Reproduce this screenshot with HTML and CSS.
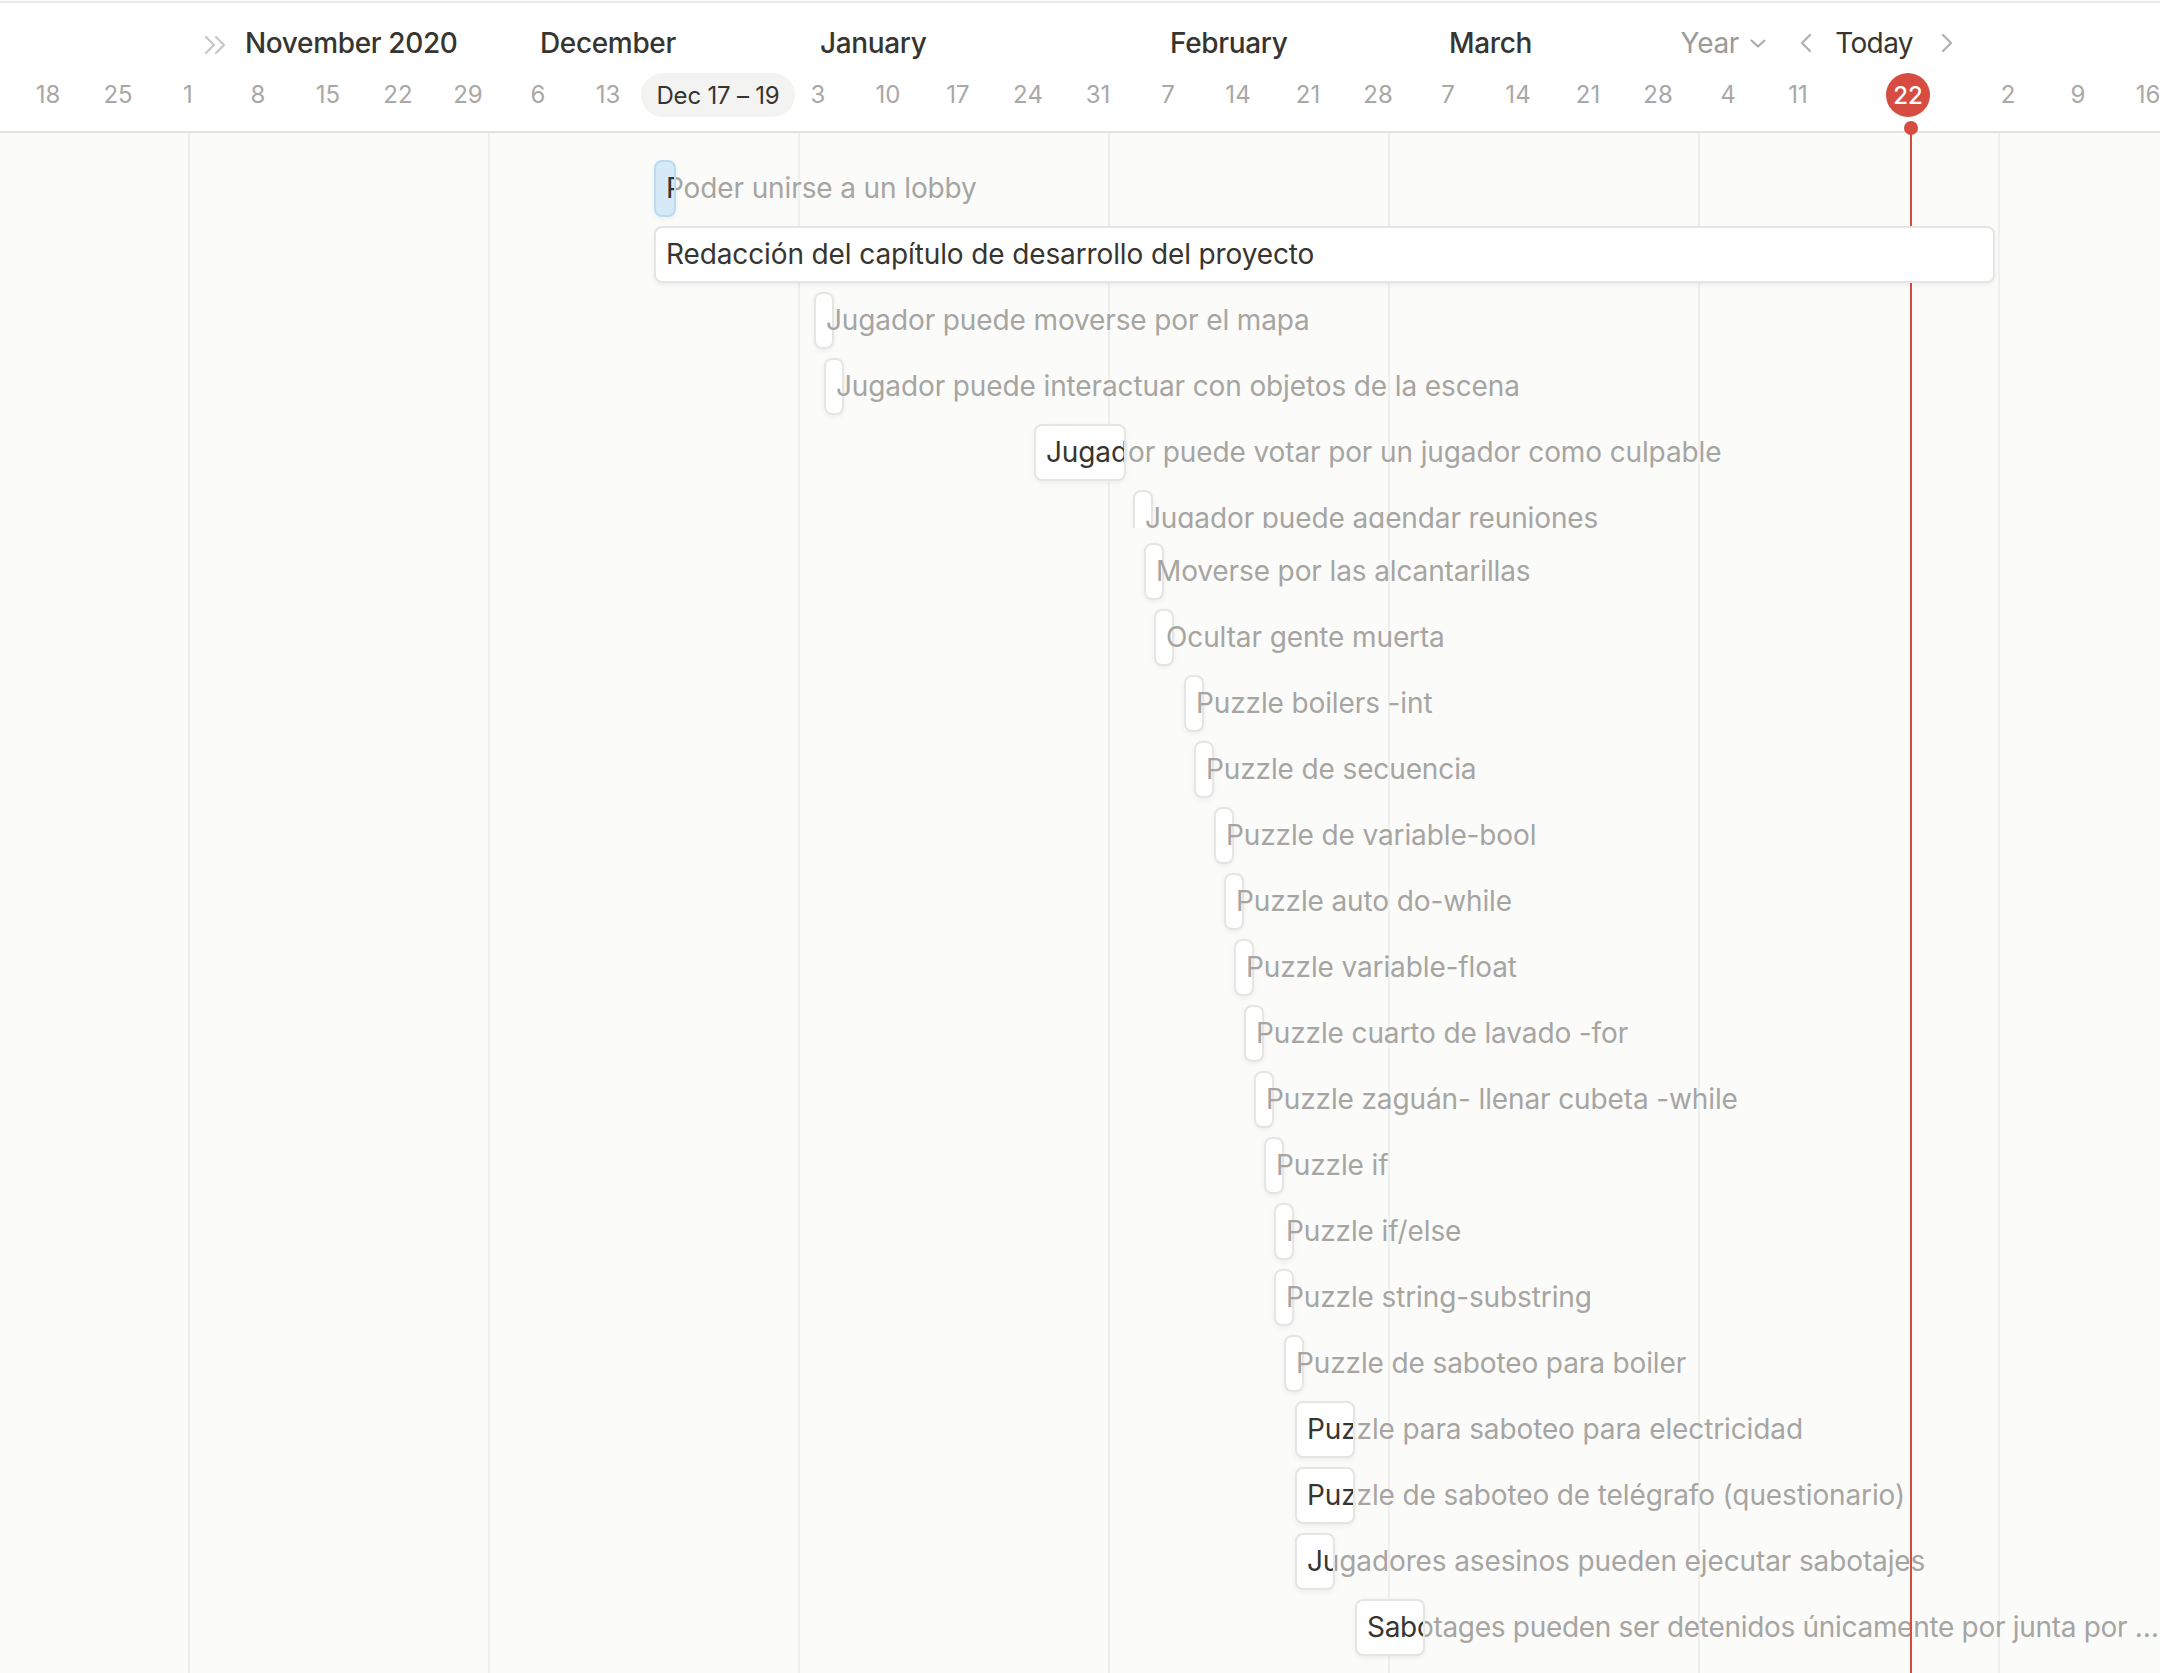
FILE: index.html
```html
<!DOCTYPE html>
<html lang="es">
<head>
<meta charset="utf-8">
<title>Timeline</title>
<link rel="stylesheet" href="styles.css">
</head>
<body>
<div class="timeline">
  <header class="head">
    <div class="months">
      <svg class="expand" style="left:204px" width="24" height="20" viewBox="0 0 24 20"><path d="M2 2l8 8-8 8M12 2l8 8-8 8" fill="none" stroke="#c7c7c5" stroke-width="2.2" stroke-linecap="round" stroke-linejoin="round"/></svg>
      <span class="month" style="left:245px">November 2020</span>
      <span class="month" style="left:540px">December</span>
      <span class="month" style="left:820px">January</span>
      <span class="month" style="left:1170px">February</span>
      <span class="month" style="left:1449px">March</span>
      <div class="toolbar">
        <span class="view">Year</span>
        <svg class="caret" width="16" height="9" viewBox="0 0 16 9"><path d="M1.5 1.5l6.5 6 6.5-6" fill="none" stroke="#a8a8a6" stroke-width="2" stroke-linecap="round" stroke-linejoin="round"/></svg>
        <svg class="nav prev" width="14" height="20" viewBox="0 0 14 20"><path d="M11 2L3 10l8 8" fill="none" stroke="#b3b3b1" stroke-width="2.4" stroke-linecap="round" stroke-linejoin="round"/></svg>
        <span class="today">Today</span>
        <svg class="nav next" width="14" height="20" viewBox="0 0 14 20"><path d="M3 2l8 8-8 8" fill="none" stroke="#b3b3b1" stroke-width="2.4" stroke-linecap="round" stroke-linejoin="round"/></svg>
      </div>
    </div>
    <div class="days">
      <span class="day" style="left:48px">18</span>
      <span class="day" style="left:118px">25</span>
      <span class="day" style="left:188px">1</span>
      <span class="day" style="left:258px">8</span>
      <span class="day" style="left:328px">15</span>
      <span class="day" style="left:398px">22</span>
      <span class="day" style="left:468px">29</span>
      <span class="day" style="left:538px">6</span>
      <span class="day" style="left:608px">13</span>
      <span class="range">Dec 17 – 19</span>
      <span class="day" style="left:818px">3</span>
      <span class="day" style="left:888px">10</span>
      <span class="day" style="left:958px">17</span>
      <span class="day" style="left:1028px">24</span>
      <span class="day" style="left:1098px">31</span>
      <span class="day" style="left:1168px">7</span>
      <span class="day" style="left:1238px">14</span>
      <span class="day" style="left:1308px">21</span>
      <span class="day" style="left:1378px">28</span>
      <span class="day" style="left:1448px">7</span>
      <span class="day" style="left:1518px">14</span>
      <span class="day" style="left:1588px">21</span>
      <span class="day" style="left:1658px">28</span>
      <span class="day" style="left:1728px">4</span>
      <span class="day" style="left:1798px">11</span>
      <span class="todaybadge">22</span>
      <span class="day" style="left:2008px">2</span>
      <span class="day" style="left:2078px">9</span>
      <span class="day" style="left:2148px">16</span>
    </div>
  </header>
  <main class="canvas">
    <i class="grid" style="left:188px"></i>
    <i class="grid" style="left:488px"></i>
    <i class="grid" style="left:798px"></i>
    <i class="grid" style="left:1108px"></i>
    <i class="grid" style="left:1388px"></i>
    <i class="grid" style="left:1698px"></i>
    <i class="grid" style="left:1998px"></i>
    <div class="nowline" style="left:1910px"><b class="nowdot"></b></div>
    <div class="rows">
      <div class="row"><span class="label" style="left:666px">Poder unirse a un lobby</span><div class="bar blue" style="left:654px;width:22px"><span>Poder unirse a un lobby</span></div></div>
      <div class="row"><span class="label" style="left:666px">Redacción del capítulo de desarrollo del proyecto</span><div class="bar" style="left:654px;width:1341px"><span>Redacción del capítulo de desarrollo del proyecto</span></div></div>
      <div class="row narrow"><span class="label" style="left:826px">Jugador puede moverse por el mapa</span><div class="bar" style="left:814px;width:20px"></div></div>
      <div class="row narrow"><span class="label" style="left:836px">Jugador puede interactuar con objetos de la escena</span><div class="bar" style="left:824px;width:20px"></div></div>
      <div class="row"><span class="label" style="left:1046px">Jugador puede votar por un jugador como culpable</span><div class="bar" style="left:1034px;width:92px"><span>Jugador puede votar por un jugador como culpable</span></div></div>
      <div class="row narrow clipped"><span class="label" style="left:1145px">Jugador puede agendar reuniones</span><div class="bar" style="left:1133px;width:20px"></div></div>
      <div class="row narrow"><span class="label" style="left:1156px">Moverse por las alcantarillas</span><div class="bar" style="left:1144px;width:20px"></div></div>
      <div class="row narrow"><span class="label" style="left:1166px">Ocultar gente muerta</span><div class="bar" style="left:1154px;width:20px"></div></div>
      <div class="row narrow"><span class="label" style="left:1196px">Puzzle boilers -int</span><div class="bar" style="left:1184px;width:20px"></div></div>
      <div class="row narrow"><span class="label" style="left:1206px">Puzzle de secuencia</span><div class="bar" style="left:1194px;width:20px"></div></div>
      <div class="row narrow"><span class="label" style="left:1226px">Puzzle de variable-bool</span><div class="bar" style="left:1214px;width:20px"></div></div>
      <div class="row narrow"><span class="label" style="left:1236px">Puzzle auto do-while</span><div class="bar" style="left:1224px;width:20px"></div></div>
      <div class="row narrow"><span class="label" style="left:1246px">Puzzle variable-float</span><div class="bar" style="left:1234px;width:20px"></div></div>
      <div class="row narrow"><span class="label" style="left:1256px">Puzzle cuarto de lavado -for</span><div class="bar" style="left:1244px;width:20px"></div></div>
      <div class="row narrow"><span class="label" style="left:1266px">Puzzle zaguán- llenar cubeta -while</span><div class="bar" style="left:1254px;width:20px"></div></div>
      <div class="row narrow"><span class="label" style="left:1276px">Puzzle if</span><div class="bar" style="left:1264px;width:20px"></div></div>
      <div class="row narrow"><span class="label" style="left:1286px">Puzzle if/else</span><div class="bar" style="left:1274px;width:20px"></div></div>
      <div class="row narrow"><span class="label" style="left:1286px">Puzzle string-substring</span><div class="bar" style="left:1274px;width:20px"></div></div>
      <div class="row narrow"><span class="label" style="left:1296px">Puzzle de saboteo para boiler</span><div class="bar" style="left:1284px;width:20px"></div></div>
      <div class="row"><span class="label" style="left:1307px">Puzzle para saboteo para electricidad</span><div class="bar" style="left:1295px;width:60px"><span>Puzzle para saboteo para electricidad</span></div></div>
      <div class="row"><span class="label" style="left:1307px">Puzzle de saboteo de telégrafo (questionario)</span><div class="bar" style="left:1295px;width:60px"><span>Puzzle de saboteo de telégrafo (questionario)</span></div></div>
      <div class="row"><span class="label" style="left:1307px">Jugadores asesinos pueden ejecutar sabotajes</span><div class="bar" style="left:1295px;width:40px"><span>Jugadores asesinos pueden ejecutar sabotajes</span></div></div>
      <div class="row"><span class="label tight" style="left:1367px">Sabotages pueden ser detenidos únicamente por junta por tiempo limitado</span><div class="bar" style="left:1355px;width:70px"><span class="tight">Sabotages pueden ser detenidos únicamente por junta por tiempo limitado</span></div></div>
    </div>
  </main>
</div>
</body>
</html>
```
FILE: styles.css
```css
* { box-sizing: border-box; }
html, body { margin: 0; padding: 0; }
body {
  font-family: Inter, "Noto Sans", "Liberation Sans", sans-serif;
  color: #37352f;
  background: #fbfbfa;
}
.timeline {
  width: 2160px;
  height: 1673px;
  display: flex;
  flex-direction: column;
  overflow: hidden;
}
.head {
  flex: none;
  margin-top: 1px;
  height: 132px;
  background: #fff;
  border-top: 2px solid #e9e9e8;
  border-bottom: 2px solid #e3e3e2;
  display: flex;
  flex-direction: column;
}
.months {
  position: relative;
  height: 66px;
  display: flex;
  align-items: center;
  justify-content: flex-end;
  padding-right: 206px;
  padding-top: 14px;
}
.expand { position: absolute; top: 32px; }
.month {
  position: absolute;
  top: 22px;
  font-size: 28px;
  font-weight: 500;
  line-height: 36px;
  letter-spacing: -0.35px;
  white-space: nowrap;
  color: #37352f;
}
.toolbar {
  display: flex;
  align-items: center;
  height: 36px;
  margin-top: -1px;
}
.view { font-size: 28px; color: #9b9a97; letter-spacing: -0.3px; }
.caret { margin-left: 11px; margin-top: 2px; }
.prev { margin-left: 33px; }
.today { font-size: 28px; color: #37352f; letter-spacing: -0.6px; margin-left: 22px; margin-right: 27px; }
.days {
  position: relative;
  flex: 1;
}
.day {
  position: absolute;
  top: 10px;
  transform: translateX(-50%);
  font-size: 24px;
  line-height: 32px;
  color: #a9a8a5;
  white-space: nowrap;
}
.range {
  position: absolute;
  left: 641px;
  top: 4px;
  width: 154px;
  height: 44px;
  border-radius: 22px;
  background: #f3f3f2;
  display: flex;
  align-items: center;
  justify-content: center;
  font-size: 24px;
  letter-spacing: -0.2px;
  color: #37352f;
  white-space: nowrap;
}
.todaybadge {
  position: absolute;
  left: 1886px;
  top: 4px;
  width: 44px;
  height: 44px;
  border-radius: 50%;
  background: #d64c40;
  color: #fff;
  font-size: 24px;
  font-weight: 500;
  display: flex;
  align-items: center;
  justify-content: center;
}
.canvas {
  position: relative;
  flex: 1;
  background: #fbfbfa;
}
.grid {
  position: absolute;
  top: 0;
  bottom: 0;
  width: 2px;
  background: #efefee;
}
.nowline {
  position: absolute;
  top: -2px;
  bottom: 0;
  width: 2px;
  background: #d64c40;
  z-index: 2;
}
.nowdot {
  position: absolute;
  left: -6px;
  top: -10px;
  width: 14px;
  height: 14px;
  border-radius: 50%;
  background: #d64c40;
}
.rows {
  padding-top: 27px;
  display: flex;
  flex-direction: column;
  gap: 9px;
}
.row {
  position: relative;
  height: 57px;
  flex: none;
}
.row.clipped {
  height: 38px;
  overflow: hidden;
  margin-bottom: 6px;
}
.label {
  position: absolute;
  top: 0;
  right: 0;
  z-index: 1;
  font-size: 28px;
  line-height: 57px;
  letter-spacing: -0.12px;
  color: #a6a5a2;
  white-space: nowrap;
  overflow: hidden;
  text-overflow: ellipsis;
}
.row.narrow .label { z-index: 4; }
.bar {
  position: absolute;
  top: 0;
  height: 57px;
  background: #fff;
  border: 2px solid #e5e5e4;
  border-radius: 8px;
  box-shadow: 0 2px 5px rgba(15, 15, 15, 0.06);
  overflow: hidden;
  z-index: 3;
}
.bar span {
  display: block;
  padding-left: 10px;
  font-size: 28px;
  line-height: 53px;
  letter-spacing: -0.12px;
  color: #37352f;
  white-space: nowrap;
}
.label.tight, .bar span.tight { letter-spacing: -0.3px; }
.bar.blue {
  background: #d5eaf6;
  border-color: #b9dcef;
}
```
